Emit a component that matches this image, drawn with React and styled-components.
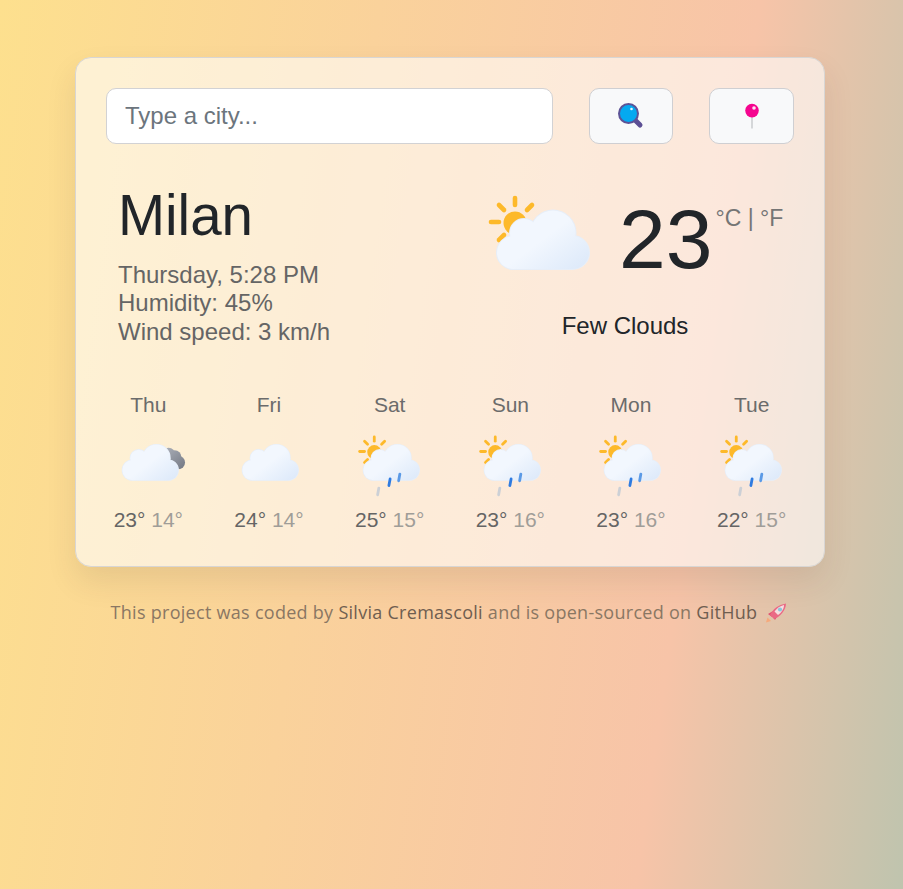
import React from "react";
import styled, { createGlobalStyle } from "styled-components";

const GlobalStyle = createGlobalStyle`
  html, body {
    margin: 0;
    min-height: 889px;
  }
  body {
    background: linear-gradient(98deg, #fde08e 0%, #f7c4a8 74%, #bfc4ae 100%);
    font-family: "Liberation Sans", Arial, sans-serif;
  }
`;

const Page = styled.div`
  width: 750px;
  margin-left: 75px;
  padding-top: 57px;
`;

const Card = styled.div`
  box-sizing: border-box;
  height: 510px;
  padding: 30px;
  border: 1px solid #d8d6d4;
  border-radius: 16px;
  background: rgba(255, 255, 255, 0.6);
  box-shadow: 0 15px 30px rgba(60, 50, 40, 0.1);
`;

const SearchRow = styled.form`
  display: flex;
  gap: 36px;
`;

const CityInput = styled.input`
  box-sizing: border-box;
  flex: 0 0 447px;
  height: 56px;
  padding: 0 18px;
  border: 1px solid #d2d2d4;
  border-radius: 10px;
  background: #fff;
  font: 24px "Liberation Sans", Arial, sans-serif;
  &::placeholder {
    color: #6c757d;
    opacity: 1;
  }
`;

const IconButton = styled.button`
  box-sizing: border-box;
  flex: 0 0 ${(p) => p.$width}px;
  height: 56px;
  padding: 0;
  display: flex;
  align-items: center;
  justify-content: center;
  border: 1px solid #cfcfd2;
  border-radius: 10px;
  background: #f8f9fa;
`;

const Current = styled.div`
  display: flex;
  justify-content: space-between;
  margin-top: 38px;
  padding-left: 12px;
`;

const Place = styled.div``;

const City = styled.h1`
  margin: 0;
  font-size: 56.5px;
  font-weight: 400;
  line-height: 67px;
  color: #212529;
`;

const Details = styled.ul`
  list-style: none;
  margin: 12px 0 0;
  padding: 0;
  font-size: 24px;
  line-height: 28.4px;
  color: #656565;
`;

const Conditions = styled.div`
  width: 310px;
  margin-right: 12px;
`;

const NowRow = styled.div`
  display: flex;
  align-items: flex-start;
  height: 108px;
`;

const BigIcon = styled.div`
  flex: 0 0 110px;
  height: 105px;
  margin: 8px 0 0 13px;
`;

const Temperature = styled.span`
  margin: 7px 0 0 24px;
  font-size: 84px;
  line-height: 100px;
  color: #212529;
`;

const Units = styled.span`
  margin: 22px 0 0 3px;
  font-size: 23px;
  line-height: 28px;
  white-space: nowrap;
  color: #757575;
`;

const Description = styled.div`
  margin-top: 22px;
  text-align: center;
  font-size: 24px;
  line-height: 28px;
  color: #212529;
  transform: translateX(-2px);
`;

const Forecast = styled.div`
  display: grid;
  grid-template-columns: repeat(6, 1fr);
  width: 724px;
  margin: 47px 0 0 -18px;
`;

const Day = styled.div`
  display: flex;
  flex-direction: column;
  align-items: center;
`;

const DayName = styled.div`
  font-size: 21px;
  line-height: 24px;
  color: #6b6b6b;
`;

const DayIcon = styled.div`
  width: 67px;
  height: 64px;
  margin-top: 15px;
`;

const Temps = styled.div`
  margin-top: 12px;
  font-size: 21px;
  line-height: 24px;
  color: #656565;
`;

const Low = styled.span`
  color: #a09d98;
`;

const Footer = styled.p`
  margin: 33px 0 0;
  padding-right: 2px;
  text-align: center;
  font-family: "Open Sans", sans-serif;
  font-size: 18px;
  letter-spacing: 0.28px;
  line-height: 24px;
  color: #8a7763;
`;

const FooterLink = styled.a`
  color: #6f5e50;
  text-decoration: none;
`;

const Rocket = styled.svg`
  vertical-align: -4px;
  margin-left: 3px;
`;

function SearchIcon() {
  return (
    <svg width="28" height="28" viewBox="0 0 28 28">
      <line x1="17" y1="17" x2="23" y2="23" stroke="#5c4f94" strokeWidth="5" strokeLinecap="round" />
      <circle cx="11.5" cy="11.5" r="9.5" fill="#04a9f0" stroke="#5c5396" strokeWidth="2" />
      <circle cx="14.5" cy="7" r="1.3" fill="#e6f6ff" />
    </svg>
  );
}

function PinIcon() {
  return (
    <svg width="16" height="26" viewBox="0 0 16 26">
      <rect x="7.2" y="10" width="1.6" height="15.5" fill="#cdcfd2" />
      <circle cx="8" cy="7.6" r="6.8" fill="#f5058f" />
      <circle cx="10" cy="5" r="1.8" fill="#ffe3f2" />
    </svg>
  );
}

function RocketIcon() {
  return (
    <Rocket width="22" height="20" viewBox="0 0 22 20">
      <path d="M1 19.5 l1.5 -5 l3.5 3.5 z" fill="#f6a97c" />
      <path d="M3 11 l5 -3 l-1 6 z M10 17 l3 -5 l-6 1 z" fill="#e2506f" />
      <path d="M5 12 C8 6 13 2 21 0.5 C21 7 15 14 9 16 z" fill="#ea6a85" />
      <path d="M9.5 8.5 C12 5 15 3 19 2 C19 6 16.5 9.5 13 12 z" fill="#f6dfe0" />
      <circle cx="15" cy="6.5" r="2.1" fill="#8cc4d8" />
    </Rocket>
  );
}

const rays = [
  [30, 8, 30, 15],
  [14, 15, 19, 20],
  [6, 32, 14, 32],
  [14, 50, 19, 45],
  [47, 15, 42, 20],
];

function CloudShape(props) {
  return (
    <g {...props}>
      <rect x="12" y="46" width="92" height="33" rx="16.5" />
      <circle cx="68" cy="43" r="22.5" />
      <circle cx="39" cy="43" r="14" />
    </g>
  );
}

function WeatherIcon({ id, sun, moon, rain }) {
  return (
    <svg width="100%" height="100%" viewBox="0 0 110 105" style={{ overflow: "visible", display: "block" }}>
      <defs>
        <linearGradient id={id} gradientUnits="userSpaceOnUse" x1="40" y1="25" x2="85" y2="85">
          <stop offset="0.4" stopColor="#f2f7fe" />
          <stop offset="1" stopColor="#deeafa" />
        </linearGradient>
        <linearGradient id={id + "m"} gradientUnits="userSpaceOnUse" x1="85" y1="28" x2="112" y2="60">
          <stop offset="0" stopColor="#a7abb4" />
          <stop offset="1" stopColor="#757a85" />
        </linearGradient>
      </defs>
      {sun && (
        <g>
          <g stroke="#fdb92a" strokeWidth="4.6" strokeLinecap="round">
            {rays.map((r, i) => (
              <line key={i} x1={r[0]} y1={r[1]} x2={r[2]} y2={r[3]} />
            ))}
          </g>
          <circle cx="30" cy="33" r="11.5" fill="#fdb92a" />
        </g>
      )}
      {moon && (
        <g fill={`url(#${id}m)`}>
          <circle cx="88" cy="37" r="11" />
          <circle cx="98" cy="41" r="11" />
          <circle cx="104" cy="50" r="11" />
          <circle cx="95" cy="52" r="12" />
        </g>
      )}
      <CloudShape fill="#e7eef8" stroke="#e7eef8" strokeWidth="2" />
      <CloudShape fill={`url(#${id})`} />
      {rain && (
        <g strokeWidth="4.6" strokeLinecap="round">
          <line x1="56" y1="77" x2="54" y2="88" stroke="#2f7be0" />
          <line x1="72" y1="69" x2="70" y2="80" stroke="#5b9ae6" />
          <line x1="37.5" y1="92" x2="35.5" y2="103" stroke="#ccd0d6" />
        </g>
      )}
    </svg>
  );
}

const days = [
  { name: "Thu", high: 23, low: 14, moon: true },
  { name: "Fri", high: 24, low: 14 },
  { name: "Sat", high: 25, low: 15, sun: true, rain: true },
  { name: "Sun", high: 23, low: 16, sun: true, rain: true },
  { name: "Mon", high: 23, low: 16, sun: true, rain: true },
  { name: "Tue", high: 22, low: 15, sun: true, rain: true },
];

export default function App() {
  return (
    <Page>
      <GlobalStyle />
      <Card>
        <SearchRow>
          <CityInput type="search" placeholder="Type a city..." />
          <IconButton type="button" $width={84}>
            <SearchIcon />
          </IconButton>
          <IconButton type="button" $width={85}>
            <PinIcon />
          </IconButton>
        </SearchRow>

        <Current>
          <Place>
            <City>Milan</City>
            <Details>
              <li>Thursday, 5:28 PM</li>
              <li>Humidity: 45%</li>
              <li>Wind speed: 3 km/h</li>
            </Details>
          </Place>
          <Conditions>
            <NowRow>
              <BigIcon>
                <WeatherIcon id="now" sun />
              </BigIcon>
              <Temperature>23</Temperature>
              <Units>°C | °F</Units>
            </NowRow>
            <Description>Few Clouds</Description>
          </Conditions>
        </Current>

        <Forecast>
          {days.map((d) => (
            <Day key={d.name}>
              <DayName>{d.name}</DayName>
              <DayIcon>
                <WeatherIcon id={"day" + d.name} sun={d.sun} moon={d.moon} rain={d.rain} />
              </DayIcon>
              <Temps>
                {d.high}° <Low>{d.low}°</Low>
              </Temps>
            </Day>
          ))}
        </Forecast>
      </Card>
      <Footer>
        This project was coded by <FooterLink href="#">Silvia Cremascoli</FooterLink> and is
        open-sourced on <FooterLink href="#">GitHub</FooterLink> <RocketIcon />
      </Footer>
    </Page>
  );
}
